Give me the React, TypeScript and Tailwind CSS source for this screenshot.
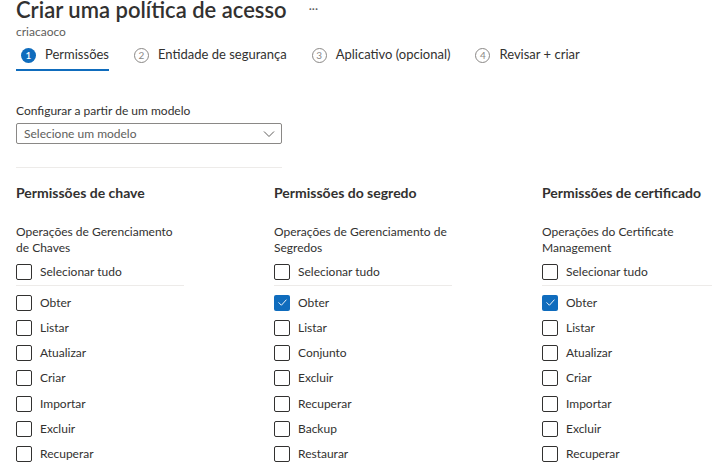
import React from 'react';

type Item = { label: string; checked?: boolean };

const columns: { title: string; sub: string; width: string; items: Item[] }[] = [
  {
    title: 'Permissões de chave',
    sub: 'Operações de Gerenciamento de Chaves',
    width: 'w-[168px]',
    items: [
      { label: 'Obter' },
      { label: 'Listar' },
      { label: 'Atualizar' },
      { label: 'Criar' },
      { label: 'Importar' },
      { label: 'Excluir' },
      { label: 'Recuperar' },
    ],
  },
  {
    title: 'Permissões do segredo',
    sub: 'Operações de Gerenciamento de Segredos',
    width: 'w-[178px]',
    items: [
      { label: 'Obter', checked: true },
      { label: 'Listar' },
      { label: 'Conjunto' },
      { label: 'Excluir' },
      { label: 'Recuperar' },
      { label: 'Backup' },
      { label: 'Restaurar' },
    ],
  },
  {
    title: 'Permissões de certificado',
    sub: 'Operações do Certificate Management',
    width: 'w-[190px]',
    items: [
      { label: 'Obter', checked: true },
      { label: 'Listar' },
      { label: 'Atualizar' },
      { label: 'Criar' },
      { label: 'Importar' },
      { label: 'Excluir' },
      { label: 'Recuperar' },
    ],
  },
];

const steps = ['Permissões', 'Entidade de segurança', 'Aplicativo (opcional)', 'Revisar + criar'];

const Checkbox: React.FC<{ checked?: boolean }> = ({ checked }) =>
  checked ? (
    <span className="w-[16px] h-[16px] rounded-[2px] bg-[#0f6cbd] flex items-center justify-center shrink-0">
      <svg width="11" height="11" viewBox="0 0 12 12" fill="none">
        <path d="M2 6.2 L4.8 9 L10 3.2" stroke="white" strokeWidth="1" strokeLinecap="round" strokeLinejoin="round" />
      </svg>
    </span>
  ) : (
    <span className="w-[16px] h-[16px] rounded-[2px] border border-[#323130] bg-white shrink-0" />
  );

const Row: React.FC<{ item: Item }> = ({ item }) => (
  <div className="flex items-center h-[25.2px] gap-[8px]">
    <Checkbox checked={item.checked} />
    <span className="text-[12px] text-[#323130]">{item.label}</span>
  </div>
);

export default function App() {
  return (
    <div className="w-[712px] h-[468px] overflow-hidden bg-white text-[#323130] font-['Lato','Open_Sans',sans-serif] px-4">
      <div className="flex items-center gap-[22px] h-[26px] -mt-[3px]">
        <h1 className="text-[22px] leading-[26px] font-semibold whitespace-nowrap">Criar uma política de acesso</h1>
        <span className="text-[12px] text-[#605e5c] -mt-[2px]">···</span>
      </div>
      <div className="text-[12px] leading-[14px] text-[#605e5c] mt-[2px]">criacaoco</div>

      <div className="flex items-start gap-[20px] mt-[2px]">
        {steps.map((s, i) => (
          <div key={s} className="flex flex-col">
            <div className="flex items-center h-[28px] gap-[9px] pl-[5px]">
              {i === 0 ? (
                <span className="w-[15px] h-[15px] rounded-full bg-[#0f6cbd] text-white text-[10px] font-semibold flex items-center justify-center">1</span>
              ) : (
                <span className="w-[15px] h-[15px] rounded-full border border-[#8a8886] text-[#8a8886] text-[10px] flex items-center justify-center">{i + 1}</span>
              )}
              <span className="text-[13px] whitespace-nowrap">{s}</span>
            </div>
            <div className={i === 0 ? 'h-[2px] bg-[#0f6cbd]' : 'h-[2px]'} />
          </div>
        ))}
      </div>

      <div className="mt-[31px] text-[12px] leading-[18px]">Configurar a partir de um modelo</div>
      <div className="mt-[3px] w-[266px] h-[21px] border border-[#8a8886] rounded-[2px] flex items-center justify-between pl-[7px] pr-[6px]">
        <span className="text-[12px] text-[#605e5c]">Selecione um modelo</span>
        <svg width="12" height="8" viewBox="0 0 12 8" fill="none">
          <path d="M1 1.5 L6 6.5 L11 1.5" stroke="#605e5c" strokeWidth="1" />
        </svg>
      </div>
      <div className="mt-[23px] w-[266px] h-px bg-[#edebe9]" />

      <div className="flex gap-[90px] mt-[16px]">
        {columns.map((c) => (
          <div key={c.title} className={`${c.width} shrink-0`}>
            <h2 className="text-[14px] leading-[18px] font-bold whitespace-nowrap">{c.title}</h2>
            <p className="mt-[22px] text-[12px] leading-[16px]">{c.sub}</p>
            <div className="mt-[3px]">
              <Row item={{ label: 'Selecionar tudo' }} />
            </div>
            <div className="h-px bg-[#edebe9] mt-[1px] mb-[4px]" />
            {c.items.map((it) => (
              <Row key={it.label} item={it} />
            ))}
          </div>
        ))}
      </div>
    </div>
  );
}
